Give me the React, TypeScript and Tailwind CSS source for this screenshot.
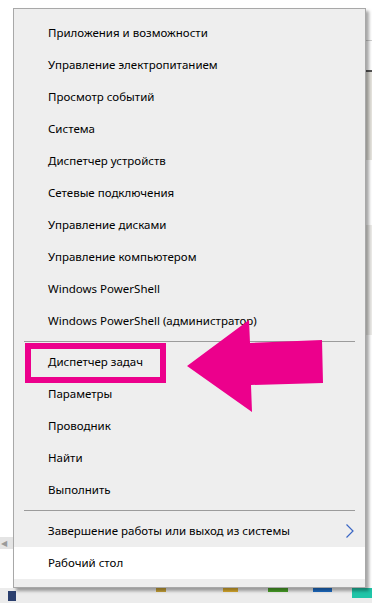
const groupA = [
  "Приложения и возможности",
  "Управление электропитанием",
  "Просмотр событий",
  "Система",
  "Диспетчер устройств",
  "Сетевые подключения",
  "Управление дисками",
  "Управление компьютером",
  "Windows PowerShell",
  "Windows PowerShell (администратор)",
];

const groupB = ["Диспетчер задач", "Параметры", "Проводник", "Найти", "Выполнить"];

const Item = ({ label }: { label: string }) => (
  <div className="h-8 flex items-center pl-[34px] text-[11.5px] text-black whitespace-nowrap">{label}</div>
);

const Separator = () => <div className="mx-[10px] my-1 h-px bg-[#9b9b9b]" />;

const App = () => {
  return (
    <div
      className="relative w-[372px] h-[603px] bg-white overflow-hidden"
      style={{ fontFamily: '"Noto Sans", "Open Sans", sans-serif' }}
    >
      {/* background window peeking out on the right */}
      <div className="absolute right-0 top-0 w-[8px] h-[590px] flex flex-col">
        <div className="h-[41px] bg-white border-b border-[#cfcfcf]" />
        <div className="h-[31px] bg-white border-b-2 border-[#555]" />
        <div className="h-[88px] bg-[#e6e4de]" />
        <div className="h-[65px] bg-white" />
        <div className="h-[110px] bg-[#ecebe8]" />
        <div className="h-[60px] bg-white" />
        <div className="flex-1 bg-white" />
      </div>

      {/* horizontal scrollbar left of the menu */}
      <div className="absolute left-0 top-[537px] w-[14px] h-[12px] bg-[#e4e4e4] text-[8px] leading-[12px] text-[#9a9a9a] pl-[1px]">
        ◀
      </div>

      {/* taskbar */}
      <div className="absolute left-0 right-0 bottom-0 h-[15px] bg-[#ececec] flex items-start">
        <div className="ml-[8px] mt-[3px] w-[10px] h-[10px] bg-[#2b3f6e]" />
        <div className="ml-[140px] mt-0 w-[12px] h-[4px] bg-[#c9a43a]" />
        <div className="ml-[57px] mt-0 w-[18px] h-[4px] bg-[#e0b030]" />
        <div className="ml-[30px] mt-0 w-[24px] h-[4px] bg-[#4ca52a]" />
        <div className="ml-[25px] mt-0 w-[24px] h-[4px] bg-[#1f6fc9]" />
        <div className="ml-[20px] mt-0 w-[24px] h-[10px] bg-[#1fc5a8]" />
      </div>

      {/* start context menu */}
      <div className="absolute left-[13px] top-[8px] w-[353px] bg-[#eeeeee] border border-[#a8a8a8] shadow-[3px_3px_3px_rgba(0,0,0,0.35)] pt-[8px] pb-[8px]">
        {groupA.map((l) => (
          <Item key={l} label={l} />
        ))}
        <Separator />
        {groupB.map((l) => (
          <Item key={l} label={l} />
        ))}
        <Separator />
        <div className="h-8 flex items-center justify-between pl-[34px] pr-[10px] text-[11.5px] text-black whitespace-nowrap">
          <span>Завершение работы или выход из системы</span>
          <svg width="10" height="16" viewBox="0 0 10 16">
            <polyline points="1.5,1.5 8,8 1.5,14.5" fill="none" stroke="#3a66c4" strokeWidth="1.2" />
          </svg>
        </div>
        <div className="h-8 flex items-center pl-[34px] text-[11.5px] text-black bg-white">Рабочий стол</div>
      </div>

      {/* highlight box */}
      <div className="absolute left-[25px] top-[343px] w-[141px] h-[40px] border-[6px] border-[#ec008c]" />

      {/* arrow */}
      <svg className="absolute left-0 top-0" width="372" height="603" viewBox="0 0 372 603">
        <polygon
          points="187,366 249,320 250,343 322,340 323,383 251,385 252,412"
          fill="#ec008c"
        />
      </svg>
    </div>
  );
};

export default App;
